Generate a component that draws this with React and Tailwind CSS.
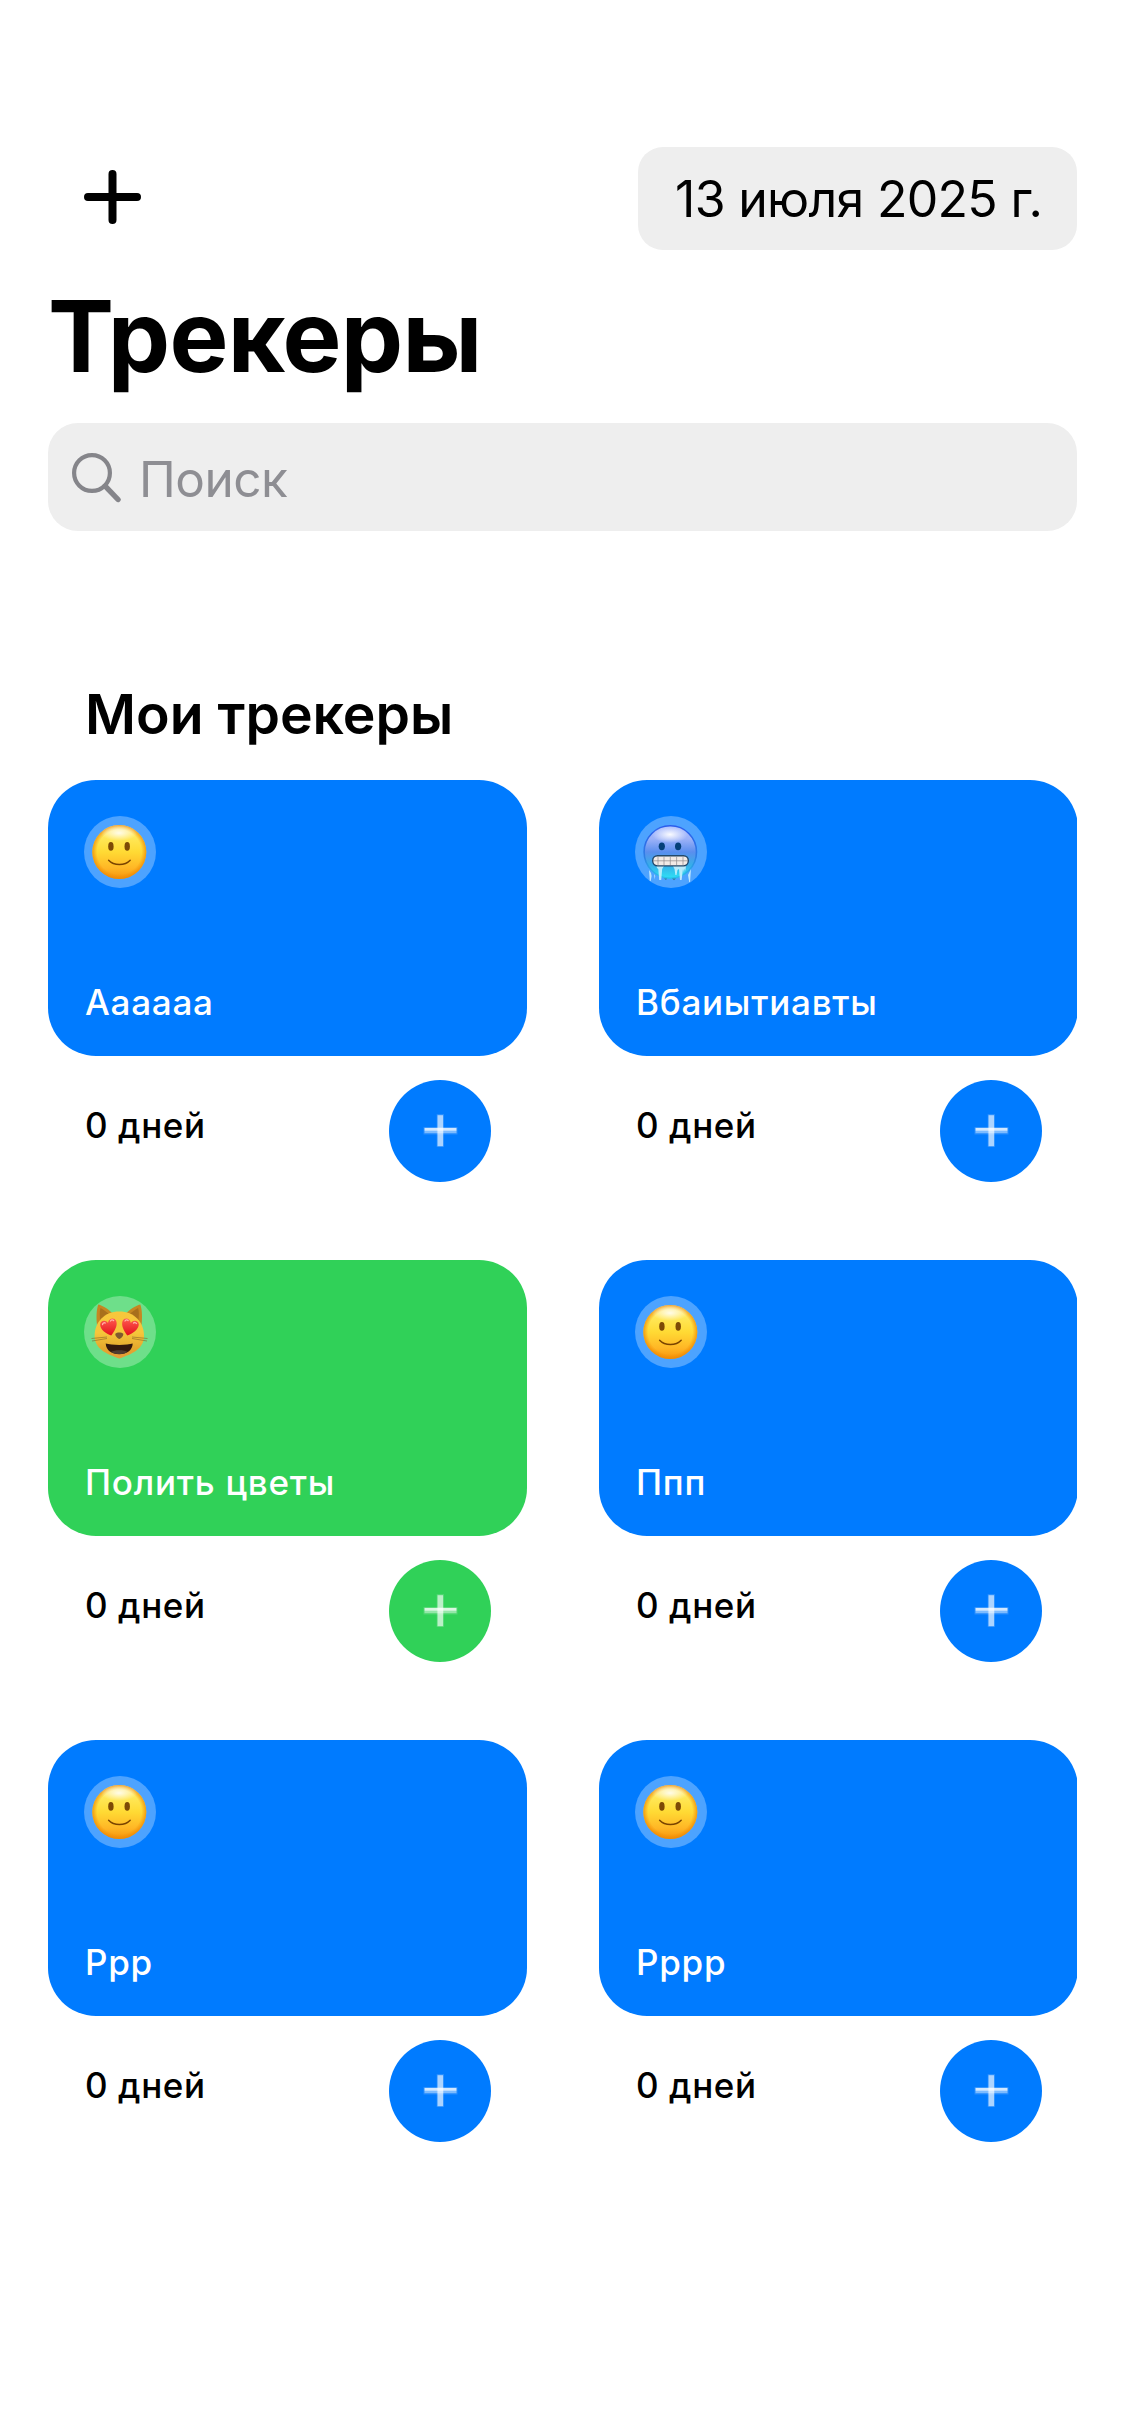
function SmileFace() {
  return (
    <svg viewBox="0 0 72 72" className="size-[72px]">
      <defs>
        <linearGradient id="smileFill" x1="0" y1="0" x2="0" y2="1">
          <stop offset="0" stopColor="#fff0a0" />
          <stop offset="0.2" stopColor="#ffe95c" />
          <stop offset="0.5" stopColor="#ffda34" />
          <stop offset="0.8" stopColor="#ffb625" />
          <stop offset="1" stopColor="#f6930c" />
        </linearGradient>
        <radialGradient id="smileEdge">
          <stop offset="0.82" stopColor="#f08a00" stopOpacity="0" />
          <stop offset="1" stopColor="#ee8600" stopOpacity="0.75" />
        </radialGradient>
        <radialGradient id="smileGlow">
          <stop offset="0" stopColor="#fff" stopOpacity="0.85" />
          <stop offset="1" stopColor="#fff" stopOpacity="0" />
        </radialGradient>
      </defs>
      <circle cx="35.3" cy="36" r="27" fill="url(#smileFill)" />
      <circle cx="35.3" cy="36" r="27" fill="url(#smileEdge)" />
      <ellipse cx="35" cy="17" rx="18" ry="8" fill="url(#smileGlow)" />
      <ellipse cx="26.9" cy="30.4" rx="2.7" ry="4.4" fill="#7d4a05" />
      <ellipse cx="43.2" cy="30.4" rx="2.7" ry="4.4" fill="#7d4a05" />
      <path d="M24.6 44.2C30 50 40.8 50 46.2 44.2" fill="none" stroke="#7a4300" strokeWidth="1.4" strokeLinecap="round" />
    </svg>
  );
}

function ColdFace() {
  return (
    <svg viewBox="0 0 72 72" className="size-[72px]">
      <defs>
        <linearGradient id="coldFill" x1="0" y1="0" x2="0" y2="1">
          <stop offset="0" stopColor="#a9bcff" />
          <stop offset="0.25" stopColor="#9db2f8" />
          <stop offset="0.5" stopColor="#5a8eee" />
          <stop offset="0.75" stopColor="#36aee8" />
          <stop offset="1" stopColor="#2ee0f5" />
        </linearGradient>
        <linearGradient id="coldRim" x1="0" y1="0" x2="0" y2="1">
          <stop offset="0" stopColor="#2a5cec" />
          <stop offset="0.6" stopColor="#2f7fe4" />
          <stop offset="1" stopColor="#27c3ea" />
        </linearGradient>
        <radialGradient id="coldGlow">
          <stop offset="0" stopColor="#fff" stopOpacity="0.95" />
          <stop offset="1" stopColor="#fff" stopOpacity="0" />
        </radialGradient>
      </defs>
      <circle cx="35.3" cy="36" r="26.2" fill="url(#coldFill)" stroke="url(#coldRim)" strokeWidth="1.6" />
      <ellipse cx="35" cy="18.5" rx="18" ry="8.5" fill="url(#coldGlow)" />
      <ellipse cx="26.8" cy="30.3" rx="3.1" ry="3.9" fill="#043f78" />
      <ellipse cx="43.1" cy="30.3" rx="3.1" ry="3.9" fill="#043f78" />
      <path
        d="M21.5 50H29L27.2 53L26.2 64H24.2L23.3 53L22 52ZM38 50H51L50.3 55L49.6 52.5L49 57L48 53L46.6 64H45L44 53L42.5 54L41.5 59H40.4L39.5 53ZM14 54L16 57L16.6 60L15.7 65H14.8ZM19 58L20.2 60L19.8 63.5ZM56 53L54 57L53 59L54.2 66H55Z"
        fill="#d9f6ff"
        fillOpacity="0.8"
      />
      <path d="M29 62.5H32L31 64ZM37 62.5H41L39 64.2Z" fill="#2b7f9d" />
      <rect x="17.7" y="39.7" width="35.6" height="10.2" rx="4.8" fill="#f2eae6" stroke="#23486a" strokeWidth="1.4" />
      <path d="M18 44.8H53M23 40.5V49M29 40.5V49M35.3 40.5V49M41.6 40.5V49M48 40.5V49" stroke="#8f8b8c" strokeWidth="0.7" />
    </svg>
  );
}

function HeartCat() {
  return (
    <svg viewBox="0 0 72 72" className="size-[72px]">
      <defs>
        <linearGradient id="catFill" x1="0" y1="0" x2="0" y2="1">
          <stop offset="0" stopColor="#f7c73c" />
          <stop offset="0.45" stopColor="#f5c63b" />
          <stop offset="0.8" stopColor="#e3a62c" />
          <stop offset="1" stopColor="#e59a3c" />
        </linearGradient>
        <linearGradient id="heartFill" x1="0" y1="0" x2="0" y2="1">
          <stop offset="0" stopColor="#ff5a50" />
          <stop offset="1" stopColor="#e3121c" />
        </linearGradient>
      </defs>
      <path d="M13.3 31C12 22 12.5 13 14.3 8.4C19 9.5 26 14 30 19ZM57.3 31C58.6 22 58.1 13 56.3 8.4C51.6 9.5 44.6 14 40.6 19Z" fill="#c58722" />
      <path d="M16.5 27C15.5 20 15.5 15 16.5 12C20 14 23 16 26 19ZM54.1 27C55.1 20 55.1 15 54.1 12C50.6 14 47.6 16 44.6 19Z" fill="#a86f1c" />
      <path d="M35.3 15.6C50 15.6 60 26 60 40C60 53 48 58 35.3 62.5C22.6 58 10.6 53 10.6 40C10.6 26 20.6 15.6 35.3 15.6Z" fill="url(#catFill)" />
      <path d="M21.7 47.6C27 49.5 43.6 49.5 48.7 47.6C48.5 54.5 42.5 58.2 35.3 58.2C28 58.2 22 54.5 21.7 47.6Z" fill="#33190d" />
      <path d="M27 56C30 53.8 40.6 53.8 43.6 56C39 58.8 31.6 58.8 27 56Z" fill="#4f3b30" />
      <path d="M31.3 37.7C33 36.2 37.6 36.2 39.3 37.7C39.6 40 37 42.5 35.3 43C33.6 42.5 31 40 31.3 37.7Z" fill="#80592f" />
      <path d="M23 41L7.5 42.5M23 42.5L8 45M48 41L63.5 42.5M48 42.5L63 45" stroke="#8a6a2a" strokeWidth="0.8" strokeOpacity="0.8" />
      <path d="M27.3 39.5C22 37.5 16 33.5 16.2 28.5C16.4 24.5 21.5 23.5 24 27C24.5 22 30.5 20.8 32.2 25C34 29.8 30.2 35.5 27.3 39.5Z" fill="url(#heartFill)" />
      <path d="M43.3 39.5C48.6 37.5 54.6 33.5 54.8 28.5C54.6 24.5 49.5 23.5 46.8 27C46.3 22 40.3 20.8 38.6 25C36.8 29.8 40.4 35.5 43.3 39.5Z" fill="url(#heartFill)" />
      <path d="M18.5 28.5C18.8 27 20 26.4 21.3 27M26.5 25C27.3 23.8 28.6 23.6 29.6 24.5M41 25C41.8 23.8 43.1 23.6 44.1 24.5M49.5 27C50.5 26.2 51.8 26.4 52.5 27.5" fill="none" stroke="#ffb3aa" strokeWidth="1.3" strokeLinecap="round" />
    </svg>
  );
}

const faces = { smile: SmileFace, cold: ColdFace, cat: HeartCat };

const trackers = [
  { name: "Аааааа", face: "smile", color: "bg-[#007bff]" },
  { name: "Вбаиытиавты", face: "cold", color: "bg-[#007bff]" },
  { name: "Полить цветы", face: "cat", color: "bg-[#30d158]" },
  { name: "Ппп", face: "smile", color: "bg-[#007bff]" },
  { name: "Ррр", face: "smile", color: "bg-[#007bff]" },
  { name: "Рррр", face: "smile", color: "bg-[#007bff]" },
];

function TrackerCard({ name, face, color }) {
  const Face = faces[face];
  return (
    <article className="h-[402px]">
      <div className={`flex h-[276px] flex-col justify-between rounded-[48px] p-9 ${color}`}>
        <div className="size-[72px] rounded-full bg-white/30">
          <Face />
        </div>
        <p className="pl-px text-[35px] leading-9 font-medium tracking-[0.75px] text-white">{name}</p>
      </div>
      <div className="mt-6 flex items-start justify-between px-9">
        <p className="pt-[27px] pl-px text-[35px] leading-9 font-medium tracking-[0.6px]">0 дней</p>
        <button className={`size-[102px] rounded-full ${color}`} aria-label="Отметить">
          <svg viewBox="0 0 102 102" className="size-[102px]" fill="#fff">
            <rect x="47.7" y="34" width="7.2" height="33" opacity="0.15" />
            <rect x="34.5" y="47" width="34" height="7.5" opacity="0.15" />
            <rect x="48.5" y="35.2" width="5.6" height="31" opacity="0.62" />
            <rect x="35.5" y="47.9" width="32" height="2.9" opacity="0.8" />
            <rect x="35.5" y="50.8" width="32" height="2.4" opacity="0.4" />
          </svg>
        </button>
      </div>
    </article>
  );
}

export default function App() {
  return (
    <main className="min-h-[2436px] w-[1125px] bg-white px-12 pt-[147px] font-['Inter',sans-serif] text-black">
      <header className="flex h-[103px] items-start justify-between">
        <button className="ml-9 pt-[23px]" aria-label="Добавить">
          <svg viewBox="0 0 57 54" className="h-[54px] w-[57px]" stroke="#000" strokeWidth="8" strokeLinecap="round">
            <path d="M28.5 4V50M4 27H53" />
          </svg>
        </button>
        <div className="flex h-[103px] w-[439px] items-center rounded-[25px] bg-[#eeeeee] pl-[37px] text-[50px] leading-[60px] tracking-[-0.7px] whitespace-nowrap">
          13 июля 2025 г.
        </div>
      </header>
      <h1 className="mt-8 text-[99px] leading-[108px] font-bold tracking-[-0.7px]">Трекеры</h1>
      <div className="mt-[33px] flex h-[108px] items-center rounded-[30px] bg-[#eeeeee] pl-6">
        <svg viewBox="0 0 49 50" className="mt-px h-[50px] w-[49px]" fill="none" stroke="#85858a" strokeLinecap="round">
          <circle cx="20" cy="20" r="17.9" strokeWidth="4.2" />
          <path d="M33.2 33.2L46 46.5" strokeWidth="5.4" />
        </svg>
        <span className="pt-[3px] pl-[18px] text-[49.5px] leading-[60px] tracking-[-0.5px] text-[#8e8e93]">Поиск</span>
      </div>
      <section>
        <h2 className="mt-[150px] pl-[37px] text-[55.3px] leading-[66px] font-semibold">Мои трекеры</h2>
        <div className="mt-[33px] grid w-[1029px] grid-cols-[479px_479px] gap-x-[72px] gap-y-[78px] overflow-hidden">
          {trackers.map((t) => (
            <TrackerCard key={t.name} {...t} />
          ))}
        </div>
      </section>
    </main>
  );
}
